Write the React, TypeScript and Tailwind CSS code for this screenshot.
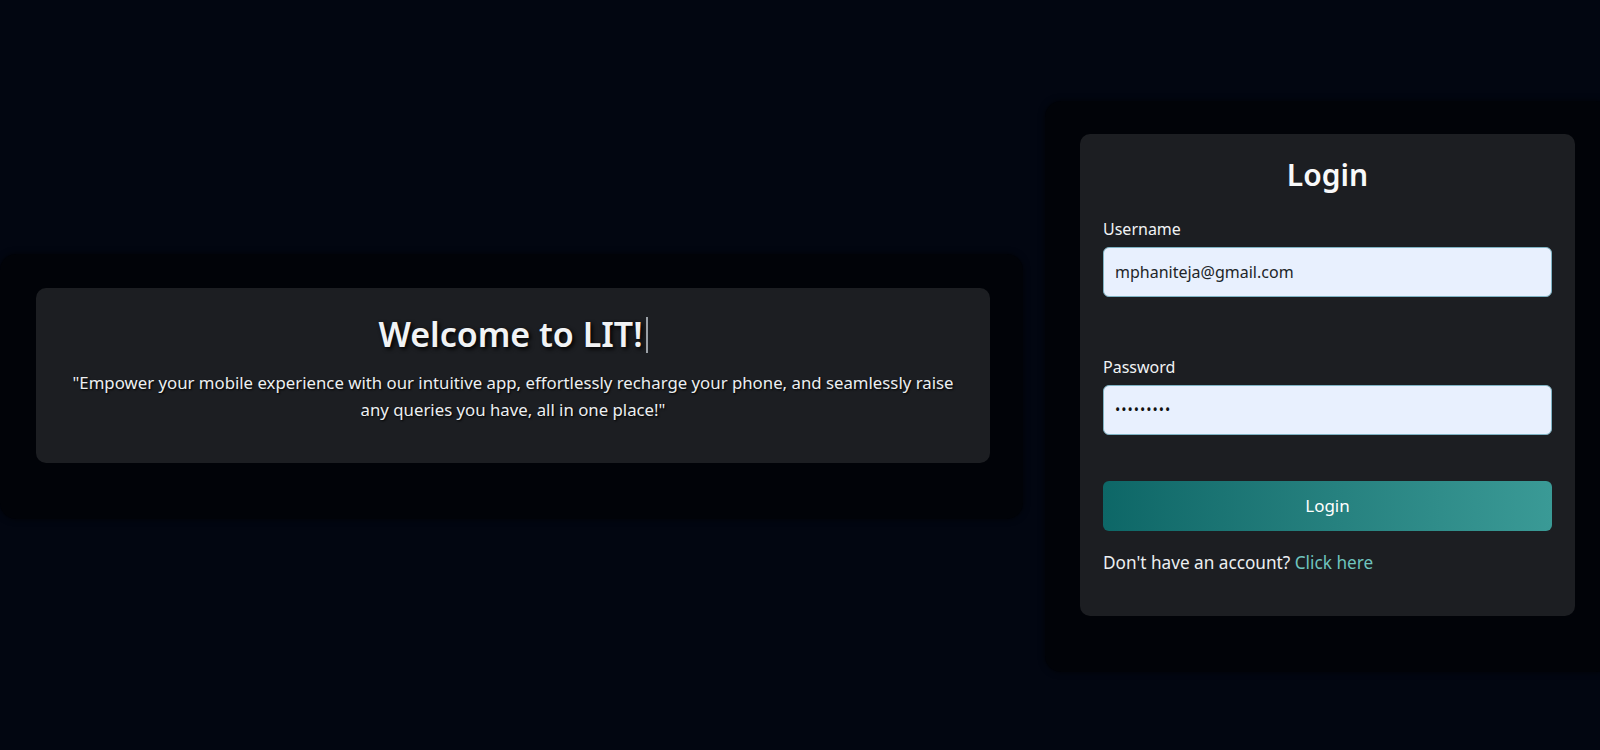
export default function App() {
  return (
    <div
      className="w-full h-[750px] overflow-hidden bg-[#020611] flex items-center pt-[22px] gap-[22px]"
      style={{ fontFamily: "'Noto Sans', 'Open Sans', sans-serif" }}
    >
      {/* welcome panel */}
      <div className="w-[1023px] shrink-0 rounded-[16px] bg-[#010308] shadow-[0_0_6px_rgba(0,0,0,0.6)] pt-[34px] pb-[56px] pl-[36px] pr-[33px]">
        <div className="rounded-[10px] bg-[#1c1e22] pt-[25px] pb-[40px] px-[30px] text-center">
          <h1 className="text-[34px] leading-[42px] font-semibold text-[#f1f3f5] [text-shadow:2px_2px_4px_#000]">
            Welcome to LIT!
            <span className="inline-block align-middle ml-[3px] w-[2px] h-[36px] bg-[#9aa0a6] -mt-[4px]" />
          </h1>
          <p className="mt-[14px] text-[16.8px] leading-[27px] text-[#eceff1] [text-shadow:1px_1px_2px_#000]">
            "Empower your mobile experience with our intuitive app, effortlessly recharge your phone, and seamlessly raise
            any queries you have, all in one place!"
          </p>
        </div>
      </div>

      {/* login panel */}
      <div className="w-[567px] shrink-0 rounded-[16px] bg-[#010308] shadow-[0_0_6px_rgba(0,0,0,0.6)] pt-[33px] pb-[56px] pl-[35px] pr-[36px]">
        <div className="w-[495px] rounded-[10px] bg-[#1c1e22] pt-[22px] pb-[41px] px-[23px]">
          <h2 className="text-center text-[30px] leading-[38px] font-semibold text-[#f8f9fa]">Login</h2>
          <label className="block mt-[23px] text-[16px] leading-[24px] text-[#f1f3f5]">Username</label>
          <div className="mt-[6px] h-[50px] rounded-[6px] border border-[#7fb3c4] bg-[#e8f0fe] px-[11px] flex items-center text-[16px] text-[#212529]">
            mphaniteja@gmail.com
          </div>
          <label className="block mt-[58px] text-[16px] leading-[24px] text-[#f1f3f5]">Password</label>
          <div className="mt-[6px] h-[50px] rounded-[6px] border border-[#7fb3c4] bg-[#e8f0fe] px-[11px] flex items-center text-[14px] tracking-[1px] text-[#111]">
            •••••••••
          </div>
          <button className="mt-[46px] w-full h-[50px] rounded-[6px] bg-gradient-to-r from-[#0d6767] to-[#3a9a96] text-[17px] text-white">
            Login
          </button>
          <p className="mt-[20px] text-[17.2px] leading-[24px] text-[#eceff1]">
            Don't have an account? <span className="text-[#6fc4bf]">Click here</span>
          </p>
        </div>
      </div>
    </div>
  );
}
